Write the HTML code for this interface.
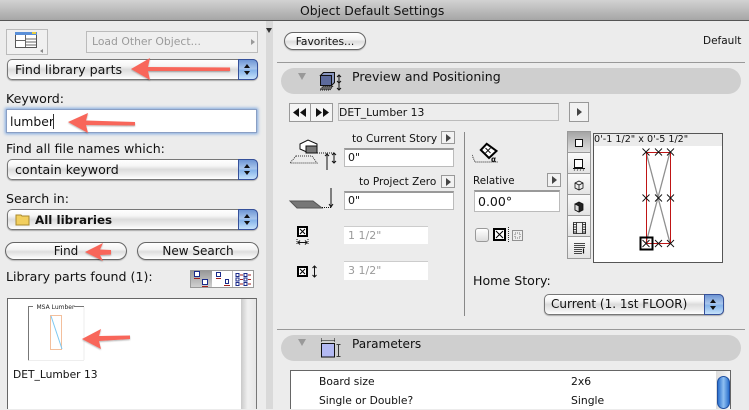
<!DOCTYPE html>
<html><head><meta charset="utf-8"><style>
html,body{margin:0;padding:0}
body{width:749px;height:409px;overflow:hidden;background:#ececec;position:relative;font-family:"DejaVu Sans","Liberation Sans",sans-serif;font-size:12.6px;color:#111}
.a,.t{position:absolute}
.t{white-space:nowrap;line-height:18px}
.pop{position:absolute;box-sizing:border-box;height:21px;border:1px solid #777;border-radius:5px;background:linear-gradient(#fff 0,#f6f6f6 30%,#dcdcdc 50%,#f2f2f2 85%,#fff 100%);box-shadow:0 1px 1px #aaa}
.pop i{position:absolute;right:-1px;top:-1px;bottom:-1px;width:20px;border-radius:0 5px 5px 0;border:1px solid #35509a;box-sizing:border-box;background:linear-gradient(#6f96d4 0,#a9c6ec 45%,#86b4ea 55%,#c6e2fb 100%)}
.pop i:before{content:"";position:absolute;left:5px;top:4px;border:3.5px solid transparent;border-top:0;border-bottom:4px solid #111}
.pop i:after{content:"";position:absolute;left:5px;top:11px;border:3.5px solid transparent;border-bottom:0;border-top:4px solid #111}
.btn{position:absolute;box-sizing:border-box;height:18px;border:1px solid #666;border-radius:9px;background:linear-gradient(#fff,#f3f3f3 40%,#dedede 55%,#fff);text-align:center;line-height:17px;box-shadow:0 1px 1px #bbb}
.inp{position:absolute;box-sizing:border-box;background:#fff;border:1px solid #bbb;border-top:2px solid #999;line-height:16px;padding-left:3px}
.dis{position:absolute;box-sizing:border-box;background:#fff;border-top:1px solid #ccc;color:#9a9a9a;padding-left:4px;line-height:18px}
.sq{position:absolute;box-sizing:border-box;border:1px solid #999;background:#f2f2f2}
.sq:after{content:"";position:absolute;left:50%;top:50%;margin:-4px 0 0 -2px;border:4px solid transparent;border-right:0;border-left:5px solid #444}
.pill{position:absolute;left:281px;width:460px;height:26px;background:#cfcfcf;border-radius:13px}
.tb{position:absolute;left:0;width:22px;box-sizing:border-box;border-bottom:1px solid #999;background:linear-gradient(#fafafa,#e4e4e4)}
</style></head><body>

<div class="a" style="left:0;top:0;width:749px;height:20px;background:linear-gradient(#d2d2d2,#a6a6a6);border-bottom:1px solid #555"></div>
<div class="t" style="left:300px;top:2px;font-size:12.4px;color:#111">Object Default Settings</div>

<div class="a" style="left:266px;top:21px;width:7px;height:388px;background:#d9d9d9"></div>
<div class="a" style="left:266px;top:28px;border:3.5px solid transparent;border-bottom:0;border-top:5px solid #333"></div>

<!-- Left column -->
<div class="a" style="left:6px;top:29px;width:42px;height:26px;box-sizing:border-box;border:1px solid #bbb;background:#f0f0f0"></div>
<svg class="a" style="left:14px;top:31px" width="32" height="22"><rect x="1.500" y="1.500" width="21" height="15" fill="#fff" stroke="#555"/><rect x="1" y="1" width="22" height="3" fill="#5a8fd8"/><rect x="18" y="1" width="4" height="2" fill="#e8d040"/><path d="M11.500 4v12M1.500 9.500h10M12 8h10M12 11h10M12 14h10" stroke="#666" fill="none"/><path d="M29 18v4l-3-2z" fill="#888"/></svg>
<div class="a" style="left:86px;top:31px;width:172px;height:22px;box-sizing:border-box;border:1px solid #bbb;background:#efefef"></div>
<div class="t" style="left:92px;top:33px;color:#9a9a9a;font-size:10.8px">Load Other Object...</div>
<div class="a" style="left:251px;top:39px;border:3.5px solid transparent;border-right:0;border-left:4px solid #999"></div>

<div class="pop" style="left:7px;top:59px;width:251px"><i></i></div>
<div class="t" style="left:15px;top:61px;font-size:12.65px">Find library parts</div>

<div class="t" style="left:6px;top:90px">Keyword:</div>
<div class="a" style="left:6px;top:109px;width:251px;height:24px;box-sizing:border-box;background:#fff;border:1px solid #8a9fc4;box-shadow:0 0 3px 1px #7fa9df"></div>
<div class="t" style="left:10px;top:113px;font-size:12.4px">lumber</div>
<div class="a" style="left:53px;top:114px;width:1px;height:15px;background:#333"></div>

<div class="t" style="left:6px;top:140px">Find all file names which:</div>
<div class="pop" style="left:7px;top:159px;width:251px"><i></i></div>
<div class="t" style="left:15px;top:161px;font-size:12.6px">contain keyword</div>

<div class="t" style="left:6px;top:190px">Search in:</div>
<div class="pop" style="left:7px;top:209px;width:251px"><i></i></div>
<svg class="a" style="left:15px;top:212px" width="16" height="14"><path d="M1 3h5l1 1h7v9H1z" fill="#f2cf5e" stroke="#a98a2e"/></svg>
<div class="t" style="left:35px;top:211px;font-weight:bold;font-size:11.9px">All libraries</div>

<div class="btn" style="left:5px;top:242px;width:122px;font-size:12px">Find</div>
<div class="btn" style="left:137px;top:242px;width:122px;font-size:12px">New Search</div>

<div class="t" style="left:6px;top:268px">Library parts found (1):</div>
<div class="a" style="left:190px;top:270px;width:64px;height:18px;box-sizing:border-box;border:1px solid #999;background:#fff"></div>
<div class="a" style="left:191px;top:271px;width:21px;height:16px;background:linear-gradient(#999,#d0d0d0)"></div>
<div class="a" style="left:232px;top:271px;width:1px;height:16px;background:#bbb"></div>
<svg class="a" style="left:190px;top:270px" width="64" height="18">
<path d="M4.500 1.500h5v5h-5zM12.500 9.500h5v5h-5zM26.500 2.500h4v4h-4zM35.500 9.500h3v4h-3zM46 3.500h3v3h-3zM46 8h3v3h-3zM46 12.500h3v3h-3zM54 3.500h3v3h-3zM54 8h3v3h-3zM54 12.500h3v3h-3z" fill="#fff" stroke="#1a2a8a"/>
<path d="M4 8.500h6M12 16.500h6M26 8.500h5M34 15.500h6M50 5h3M50 9.500h3M50 14h3M58 5h3M58 9.500h3M58 14h3" stroke="#a02020"/></svg>

<div class="a" style="left:7px;top:298px;width:250px;height:111px;box-sizing:border-box;border:1px solid #666;border-bottom:0;border-right:1px solid #777;background:#fff"></div>
<div class="a" style="left:241px;top:299px;width:15px;height:110px;background:linear-gradient(90deg,#c9c9c9,#f0f0f0 45%,#e6e6e6)"></div>
<svg class="a" style="left:26px;top:302px" width="62" height="62">
<path d="M2.500 58.500V4.500H7M48 4.500h10" stroke="#777" fill="none"/>
<path d="M2.500 58.500H58M58 5V58" stroke="#eee" fill="none"/>
<rect x="24.500" y="13.500" width="11" height="34" fill="#fff" stroke="#f3bf9c"/>
<path d="M25 14L36 47" stroke="#7cc8f2"/>
<text x="10.500" y="7" font-size="6" font-family="DejaVu Sans" fill="#222">MSA Lumber</text>
</svg>
<div class="t" style="left:13px;top:366px;font-size:10.7px">DET_Lumber 13</div>

<!-- Right top -->
<div class="btn" style="left:284px;top:32px;width:82px;font-size:10.7px">Favorites...</div>
<div class="t" style="left:703px;top:32px;font-size:10.5px">Default</div>
<div class="a" style="left:277px;top:62px;width:468px;height:1px;background:#999"></div>

<div class="pill" style="top:68px"></div>
<div class="a" style="left:298px;top:73px;border:4.500px solid transparent;border-bottom:0;border-top:7px solid #999"></div>
<svg class="a" style="left:319px;top:70px" width="26" height="24">
<path d="M1.500 5.500h11v10h-11z" fill="#5c6a9c" stroke="#111"/><path d="M1.500 5.500l3-3h11v10l-3 3v-10z" fill="#8a97c0" stroke="#111"/>
<path d="M4 16h10l-3 4H1z" fill="#666" stroke="#111" stroke-dasharray="1 1"/>
<path d="M20 5v15M18 7l2-2 2 2M18 18l2 2 2-2M18 11l2 2 2-2" stroke="#111" fill="none"/></svg>
<div class="t" style="left:352px;top:68px;font-size:12.55px">Preview and Positioning</div>

<div class="a" style="left:289px;top:103px;width:22px;height:19px;box-sizing:border-box;border:1px solid #999;background:#f4f4f4"></div>
<div class="a" style="left:311px;top:103px;width:22px;height:19px;box-sizing:border-box;border:1px solid #999;border-left:0;background:#f4f4f4"></div>
<svg class="a" style="left:289px;top:103px" width="44" height="19"><path d="M10 5v9l-6-4.500zM17 5v9l-6-4.500zM27 5v9l6-4.500zM34 5v9l6-4.500z" fill="#111"/></svg>
<div class="a" style="left:338px;top:103px;width:221px;height:18px;box-sizing:border-box;border:1px solid #bbb;border-top-color:#999;background:#ededed"></div>
<div class="t" style="left:339px;top:104px;font-size:10.8px">DET_Lumber 13</div>
<div class="sq" style="left:569px;top:102px;width:20px;height:20px"></div>

<!-- Position inputs -->
<div class="t" style="left:352px;top:130px;font-size:10.6px">to Current Story</div>
<div class="sq" style="left:441px;top:131px;width:14px;height:13px"></div>
<div class="inp" style="left:344px;top:148px;width:110px;height:19px;font-size:11px">0"</div>
<div class="t" style="left:359px;top:173px;font-size:10.5px">to Project Zero</div>
<div class="sq" style="left:441px;top:175px;width:14px;height:13px"></div>
<div class="inp" style="left:344px;top:191px;width:110px;height:19px;font-size:11px">0"</div>
<div class="dis" style="left:344px;top:226px;width:84px;height:18px;font-size:11px">1 1/2"</div>
<div class="dis" style="left:344px;top:261px;width:84px;height:19px;font-size:11px">3 1/2"</div>

<svg class="a" style="left:288px;top:136px" width="56" height="160">
<path d="M12 8l8-4 9 4v9l-8 0-9-4z" fill="#fff" stroke="#111"/><path d="M18 10h11v7H18z" fill="#777" stroke="#111"/>
<path d="M8 20h16l5 7H8l-6-0z" fill="none" stroke="#333" stroke-dasharray="1 1"/>
<path d="M29 17h17" stroke="#111" stroke-dasharray="1 1"/><path d="M39 17v17M37 20l2-2 2 2M46 17v10M44 19l2-2 2 2M44 25l2 2 2-2" stroke="#111" fill="none"/>
<path d="M2 65h23l9 7H9z" fill="#777" stroke="#555"/>
<path d="M34 71.500h9" stroke="#111" stroke-dasharray="1 1"/><path d="M43 52v19M41 68l2 3 2-3" stroke="#111" fill="none"/>
<rect x="10" y="91" width="9" height="9" fill="#fff" stroke="#000" stroke-width="2"/><path d="M12 93l5 5M17 93l-5 5" stroke="#000"/>
<path d="M9 103v6M20 103v6" stroke="#111" stroke-dasharray="1 1" fill="none"/><path d="M10 106.500h9M12 104.500l-2 2 2 2M17 104.500l2 2-2 2" stroke="#111" fill="none"/>
<rect x="10" y="131" width="9" height="9" fill="#fff" stroke="#000" stroke-width="2"/><path d="M12 133l5 5M17 133l-5 5" stroke="#000"/>
<path d="M26.500 130v11M24.500 132l2-2 2 2M24.500 139l2 2 2-2" stroke="#111" fill="none"/></svg>

<div class="a" style="left:464px;top:132px;width:1px;height:184px;background:#888"></div>

<!-- Rotation -->
<svg class="a" style="left:472px;top:142px" width="30" height="30">
<path d="M14.700 1.800L24.500 9L17 16L8.800 8z" fill="#fff" stroke="#000" stroke-width="2"/><path d="M13.500 6l5 5M18.500 6l-5 5" stroke="#111"/>
<path d="M0 13l3 7h23" stroke="#222" stroke-dasharray="1 1" fill="none"/><text x="19" y="20" font-size="7.500" font-weight="bold" font-family="DejaVu Sans" fill="#111">α</text></svg>
<div class="t" style="left:473px;top:172px;font-size:10.3px">Relative</div>
<div class="sq" style="left:547px;top:173px;width:14px;height:14px"></div>
<div class="inp" style="left:474px;top:190px;width:86px;height:22px;font-size:12.5px;line-height:19px">0.00°</div>
<div class="a" style="left:475px;top:228px;width:14px;height:14px;box-sizing:border-box;border:1px solid #999;border-radius:3px;background:linear-gradient(#fff,#ddd)"></div>
<svg class="a" style="left:492px;top:227px" width="34" height="16"><rect x="2" y="2" width="11" height="11" fill="#fff" stroke="#000" stroke-width="2"/><path d="M4 4l7 7M11 4l-7 7" stroke="#000"/><path d="M16.500 0v16" stroke="#333" stroke-dasharray="1 1"/><rect x="20.500" y="3.500" width="10" height="10" fill="#eee" stroke="#333" stroke-dasharray="1 1"/><path d="M23 6h5v5h-5z" fill="none" stroke="#777" stroke-dasharray="1 1"/></svg>

<!-- View toolbar -->
<div class="a" style="left:568px;top:132px;width:22px;height:126px;box-sizing:border-box;outline:1px solid #999;background:#eee">
<div class="tb" style="top:0;height:21px;background:linear-gradient(#a5a5a5,#e0e0e0)"></div>
<div class="tb" style="top:21px;height:21px"></div>
<div class="tb" style="top:42px;height:21px"></div>
<div class="tb" style="top:63px;height:21px"></div>
<div class="tb" style="top:84px;height:21px"></div>
<div class="tb" style="top:105px;height:21px;border:0"></div>
</div>
<svg class="a" style="left:568px;top:132px" width="22" height="126" fill="none" stroke="#111">
<rect x="7.500" y="7.500" width="7" height="7" fill="#fff"/>
<rect x="6.500" y="27.500" width="8" height="8" fill="#fff"/><path d="M5 36.500h12"/><path d="M6 38.500l1-1M9 38.500l1-1M12 38.500l1-1M15 38.500l1-1" stroke-width=".7"/>
<path d="M11 49l4 2v5l-4 2-4-2v-5zM7 51l4 2 4-2M11 53v5" stroke-width=".8"/>
<path d="M11 70l4 2v6l-4 2-4-2v-6z" fill="#222" stroke-width=".8"/><path d="M7 72l4 2v6l-4-2z" fill="#ddd" stroke-width=".8"/>
<path d="M5.500 90.500h12v11h-12zM8.500 90.500v11M14.500 90.500v11" stroke-width=".8"/><path d="M5 92.500h3M5 95h3M5 97.500h3M5 100h3M15 92.500h3M15 95h3M15 97.500h3M15 100h3" stroke-width=".7"/>
<path d="M6 111.500h11M6 113.500h11M6 115.500h11M6 117.500h8M6 119.500h8M6 121.500h8" stroke-width=".8"/><path d="M15.500 116.500v5" stroke-width="1.200"/>
</svg>

<!-- Preview -->
<div class="a" style="left:593px;top:133px;width:130px;height:130px;box-sizing:border-box;border:1px solid #555;background:#fff"></div>
<div class="a" style="left:594px;top:134px;width:128px;height:12px;background:#ebebeb"></div>
<div class="t" style="left:594px;top:132px;font-size:9.6px;line-height:15px">0'-1 1/2" x 0'-5 1/2"</div>
<svg class="a" style="left:636px;top:146px" width="44" height="108" fill="none">
<path d="M10 6L34 97M34 6L10 97" stroke="#8f8f8f" stroke-width="1.300"/>
<rect x="10.500" y="6.500" width="24" height="91" stroke="#bf1515" stroke-width="1"/>
<path d="M6.500 2.500l7 7M13.500 2.500l-7 7M19 2.500l7 7M26 2.500l-7 7M31 2.500l7 7M38 2.500l-7 7M6.500 48.500l7 7M13.500 48.500l-7 7M19 48.500l7 7M26 48.500l-7 7M31 48.500l7 7M38 48.500l-7 7M6.500 94l7 7M13.500 94l-7 7M19 94l7 7M26 94l-7 7M31 94l7 7M38 94l-7 7" stroke="#111" stroke-width=".9"/>
<rect x="4.500" y="91.500" width="12" height="12" stroke="#000" stroke-width="2"/>
</svg>

<div class="t" style="left:473px;top:272px;font-size:12.6px">Home Story:</div>
<div class="pop" style="left:544px;top:294px;width:180px"><i></i></div>
<div class="t" style="left:551px;top:295px;font-size:12px">Current (1. 1st FLOOR)</div>

<!-- Parameters -->
<div class="a" style="left:277px;top:329px;width:468px;height:1px;background:#999"></div>
<div class="pill" style="top:335px"></div>
<div class="a" style="left:298px;top:339px;border:4.500px solid transparent;border-bottom:0;border-top:7px solid #999"></div>
<svg class="a" style="left:319px;top:336px" width="26" height="24" fill="none" stroke="#111">
<rect x="2.500" y="7.500" width="13" height="13.500" fill="#b3b9f3"/><path d="M2.500 4.500h13M2.500 2.500v3M15.500 2.500v3" stroke-dasharray="1 1"/><path d="M19.500 9v11M17.500 8.500h4M17.500 20.500h4" stroke-width=".8"/></svg>
<div class="t" style="left:352px;top:335px;font-size:12.1px">Parameters</div>

<div class="a" style="left:290px;top:370px;width:441px;height:39px;box-sizing:border-box;border:1px solid #666;border-bottom:0;background:#fff"></div>
<div class="a" style="left:716px;top:371px;width:14px;height:38px;background:linear-gradient(90deg,#ddd,#f6f6f6)"></div>
<div class="a" style="left:717px;top:376px;width:13px;height:33px;box-sizing:border-box;border:1px solid #1f4fa0;border-radius:7px;background:linear-gradient(90deg,#2a6fcc,#8fc0f2 50%,#2a6fcc)"></div>
<div class="t" style="left:319px;top:373px;font-size:10.7px">Board size</div>
<div class="t" style="left:571px;top:373px;font-size:10.8px">2x6</div>
<div class="t" style="left:319px;top:392px;font-size:10.7px">Single or Double?</div>
<div class="t" style="left:571px;top:392px;font-size:10.8px">Single</div>

<!-- Red arrows -->
<svg class="a" style="left:0;top:0" width="749" height="409" fill="#f8665a" stroke="none">
<defs><filter id="s" x="-10%" y="-30%" width="120%" height="170%"><feDropShadow dx="0" dy="1" stdDeviation="0.800" flood-color="#000" flood-opacity=".3"/></filter></defs>
<g filter="url(#s)">
<path d="M131 69L150 58L148 67L230 67.500V71L148 71L150 80z"/>
<path d="M68 122L88 113L86 120.500L135 122V125.500L86 125L88 133z"/>
<path d="M85 252L103 243L100 249.500L111 250V254.500L100 255L103 261z"/>
<path d="M82 339L101 329L99 336L130 335.500V339L99 341L101 349z"/>
</g></svg>

</body></html>
